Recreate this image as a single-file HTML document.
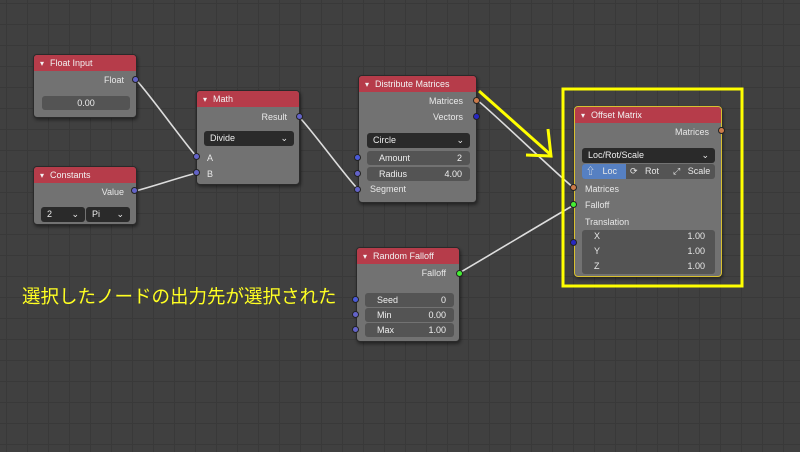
<!DOCTYPE html>
<html><head><meta charset="utf-8"><style>
*{margin:0;padding:0;box-sizing:border-box}
body{width:800px;height:452px;overflow:hidden;position:relative;font-family:"Liberation Sans","Noto Sans CJK JP",sans-serif;font-size:9px;color:#e8e8e8;
background-color:#404040;background-image:linear-gradient(#393939 1px,transparent 1px),linear-gradient(90deg,#393939 1px,transparent 1px);background-size:21px 21px;background-position:6px 3px}
.n{position:absolute;background:#727272;border:1px solid #2a2a2a;border-radius:4px;box-shadow:1px 2px 3px rgba(0,0,0,.45)}
.h{height:16px;background:#b63c4a;border-radius:3px 3px 0 0;padding-left:6px;line-height:16px;color:#f2f2f2}
.h:before{content:"▾";font-size:8px;margin-right:6px}
.a{position:absolute;white-space:nowrap}
.r{text-align:right}
.f{position:absolute;background:#545454;border-radius:3px;height:14px;line-height:14px;color:#eee;padding:0 8px}
.d{position:absolute;background:#2a2a2a;border-radius:3px;height:15px;line-height:15px;color:#eee;padding:0 6px}
.s{position:absolute;width:7px;height:7px;border-radius:50%;border:1px solid #222}
.b{background:#6363c8}.o{background:#cc7a4a}.g{background:#44ee33}.bl{background:#4a5ad8}.db{background:#2828c0}
</style></head><body>
<svg width="800" height="452" style="position:absolute;left:0;top:0">
<g stroke="#ddd" stroke-width="1.6" fill="none">
<path d="M136 80 C145 88 188 148 197 157"/>
<path d="M135 191 C145 189 187 175 197 173"/>
<path d="M299 117 C308 125 349 181 358 189"/>
<path d="M477 100 C488 108 563 180 574 188"/>
<path d="M459 273 C470 267 563 211 574 205"/>
</g>
<rect x="563" y="89" width="179" height="197" fill="none" stroke="#ffff00" stroke-width="3"/>
<g stroke="#ffff00" stroke-width="3" fill="none">
<path d="M479 91 L551 155"/><path d="M548 129 L551 156 L526 155"/>
</g>
</svg>

<div class="n" style="left:33px;top:54px;width:104px;height:64px"><div class="h">Float Input</div>
<div class="a r" style="right:12px;top:20px">Float</div>
<div class="f" style="left:8px;top:41px;width:88px;text-align:center">0.00</div></div>
<div class="s b" style="left:132px;top:76px"></div>

<div class="n" style="left:33px;top:166px;width:104px;height:59px"><div class="h">Constants</div>
<div class="a" style="right:12px;top:20px">Value</div>
<div class="d" style="left:7px;top:40px;width:44px">2<span style="float:right">⌄</span></div>
<div class="d" style="left:52px;top:40px;width:44px">Pi<span style="float:right">⌄</span></div></div>
<div class="s b" style="left:131px;top:187px"></div>

<div class="n" style="left:196px;top:90px;width:104px;height:95px"><div class="h">Math</div>
<div class="a" style="right:12px;top:21px">Result</div>
<div class="d" style="left:7px;top:40px;width:90px">Divide<span style="float:right">⌄</span></div>
<div class="a" style="left:10px;top:62px">A</div>
<div class="a" style="left:10px;top:78px">B</div></div>
<div class="s b" style="left:296px;top:113px"></div>
<div class="s b" style="left:193px;top:153px"></div>
<div class="s b" style="left:193px;top:169px"></div>

<div class="n" style="left:358px;top:75px;width:119px;height:128px"><div class="h">Distribute Matrices</div>
<div class="a" style="right:13px;top:20px">Matrices</div>
<div class="a" style="right:13px;top:36px">Vectors</div>
<div class="d" style="left:8px;top:57px;width:103px">Circle<span style="float:right">⌄</span></div>
<div class="f" style="left:8px;top:75px;width:103px;padding-left:12px">Amount<span style="float:right">2</span></div>
<div class="f" style="left:8px;top:91px;width:103px;padding-left:12px">Radius<span style="float:right">4.00</span></div>
<div class="a" style="left:11px;top:108px">Segment</div></div>
<div class="s o" style="left:473px;top:97px"></div>
<div class="s db" style="left:473px;top:113px"></div>
<div class="s bl" style="left:354px;top:154px"></div>
<div class="s b" style="left:354px;top:170px"></div>
<div class="s b" style="left:354px;top:186px"></div>

<div class="n" style="left:356px;top:247px;width:104px;height:95px"><div class="h">Random Falloff</div>
<div class="a" style="right:13px;top:20px">Falloff</div>
<div class="f" style="left:8px;top:45px;width:89px;padding-left:12px">Seed<span style="float:right">0</span></div>
<div class="f" style="left:8px;top:60px;width:89px;padding-left:12px">Min<span style="float:right">0.00</span></div>
<div class="f" style="left:8px;top:75px;width:89px;padding-left:12px">Max<span style="float:right">1.00</span></div></div>
<div class="s g" style="left:456px;top:270px"></div>
<div class="s bl" style="left:352px;top:296px"></div>
<div class="s b" style="left:352px;top:311px"></div>
<div class="s b" style="left:352px;top:326px"></div>

<div class="n" style="left:574px;top:106px;width:148px;height:171px;border-color:#d8c030"><div class="h">Offset Matrix</div>
<div class="a" style="right:12px;top:20px">Matrices</div>
<div class="d" style="left:7px;top:41px;width:133px">Loc/Rot/Scale<span style="float:right">⌄</span></div>
<div class="a" style="left:7px;top:57px;width:133px;height:15px;background:#545454;border-radius:3px;line-height:15px">
<span style="position:absolute;left:0;width:44px;height:15px;background:#5680c2;border-radius:3px 0 0 3px;padding-left:4px">⇧ &nbsp;&nbsp;Loc</span>
<span style="position:absolute;left:46px;padding-left:2px">⟳ &nbsp;&nbsp;Rot</span>
<span style="position:absolute;left:91px">⤢ &nbsp;&nbsp;Scale</span></div>
<div class="a" style="left:10px;top:77px">Matrices</div>
<div class="a" style="left:10px;top:93px">Falloff</div>
<div class="a" style="left:10px;top:110px">Translation</div>
<div class="a" style="left:7px;top:123px;width:133px;height:44px;background:#545454;border-radius:3px"></div>
<div class="a" style="left:19px;top:124px;width:111px">X<span style="float:right">1.00</span></div>
<div class="a" style="left:19px;top:139px;width:111px">Y<span style="float:right">1.00</span></div>
<div class="a" style="left:19px;top:154px;width:111px">Z<span style="float:right">1.00</span></div></div>
<div class="s o" style="left:718px;top:127px"></div>
<div class="s o" style="left:570px;top:184px"></div>
<div class="s g" style="left:570px;top:201px"></div>
<div class="s db" style="left:570px;top:239px"></div>

<div class="a" style="left:22px;top:283px;font-size:18.5px;color:#ffff22">選択したノードの出力先が選択された</div>
</body></html>
